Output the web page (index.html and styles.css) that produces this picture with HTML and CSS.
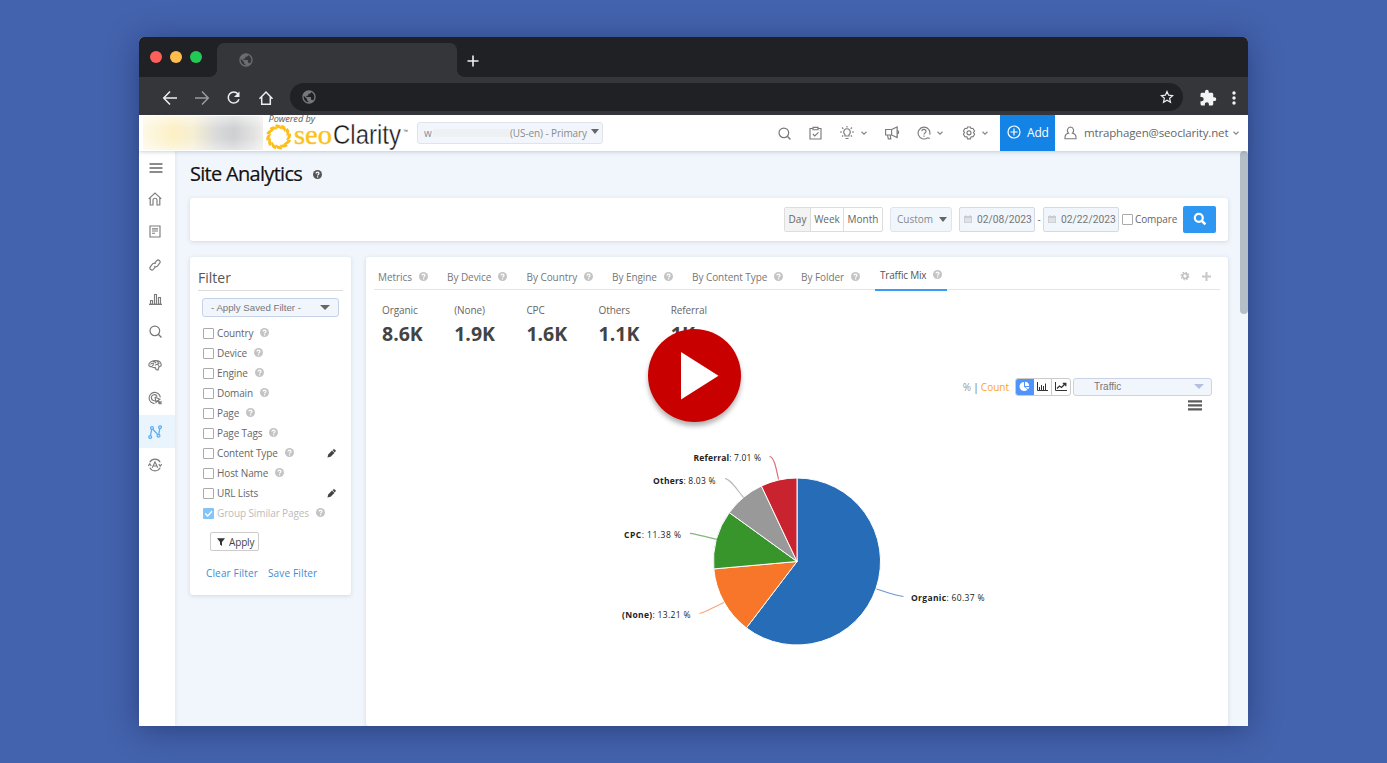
FILE: index.html
```
<!DOCTYPE html>
<html lang="en">
<head>
<meta charset="utf-8">
<title>Site Analytics</title>
<link rel="stylesheet" href="styles.css">
</head>
<body>
<svg class="defs" width="0" height="0">
  <symbol id="help" viewBox="0 0 12 12"><circle cx="6" cy="6" r="6" fill="currentColor"/><path d="M4 4.6C4.1 2.2 8 2.3 8 4.5 8 6 6.1 5.8 6.1 7.3M6.1 8.4V9.9" fill="none" stroke="#fff" stroke-width="1.6"/></symbol>
  <symbol id="globe" viewBox="0 0 24 24"><path fill="currentColor" d="M12 2C6.5 2 2 6.5 2 12s4.500 10 10 10 10-4.500 10-10S17.500 2 12 2zm-1 17.930c-3.950-.490-7-3.850-7-7.930 0-.620.080-1.210.210-1.790L9 15v1c0 1.100.900 2 2 2v1.930zm6.900-2.540c-.260-.810-1-1.390-1.900-1.390h-1v-3c0-.550-.450-1-1-1H8v-2h2c.550 0 1-.450 1-1V7h2c1.100 0 2-.900 2-2v-.410c2.930 1.190 5 4.060 5 7.410 0 2.080-.800 3.970-2.100 5.390z"/></symbol>
  <symbol id="search" viewBox="0 0 14 14"><circle cx="6.300" cy="6.300" r="5.200" fill="none" stroke="currentColor" stroke-width="1.300"/><path d="M10 10l3.400 3.400" stroke="currentColor" stroke-width="1.500"/></symbol>
  <symbol id="chev" viewBox="0 0 6 4"><path d="M.5.700L3 3.100 5.500.700" fill="none" stroke="currentColor" stroke-width="1.200"/></symbol>
  <symbol id="pencil" viewBox="0 0 10 10"><path d="M.5 9.500l.8-3.500L5.600 1.700l2.700 2.700L4 8.700zM6.200 1.200L7.300.300Q8 0 8.700.6l.8.800q.6.700 0 1.300l-.9 1.100z" fill="currentColor"/></symbol>
  <symbol id="cal" viewBox="0 0 8 8"><path d="M0 1h8v7H0zM1.500 0h1v1h-1zM5.500 0h1v1h-1z" fill="#c9cdd2"/><path d="M.8 3h6.400v4.300H.8z" fill="#dfe3e7"/></symbol>
  <symbol id="leaf" viewBox="-14 -14 28 28"><path d="M-3.400-12.200C-.5-13 3.600-11.300 3-7.200 1.500-8.200.6-9-1.200-8.900-2.700-9-3.600-10.300-3.400-12.200z" fill="#fdbd1c"/></symbol>
</svg>

<div class="window">
  <div class="tabstrip">
    <div class="lights"><i class="red"></i><i class="amber"></i><i class="green"></i></div>
    <div class="tab"><svg width="16" height="16"><use href="#globe"/></svg></div>
    <svg class="newtab" width="12" height="12"><path d="M6 .5v11M.5 6h11" stroke="#f1f1f1" stroke-width="1.600"/></svg>
  </div>
  <div class="navbar">
    <svg width="16" height="16" class="nav white"><path d="M15 8H2M8 1.500L1.700 8 8 14.500"/></svg>
    <svg width="16" height="16" class="nav dim"><path d="M1 8h13M8 1.500L14.300 8 8 14.500"/></svg>
    <svg width="16" height="16" class="nav white"><path d="M12 4A5.500 5.500 0 1 0 13 9.300"/><path d="M13.500 1.500v5.500h-5.500z" class="solid"/></svg>
    <svg width="16" height="16" class="nav white home"><path d="M1.500 8.700L8 2l6.500 6.700M3.700 7v7.300h8.600V7"/></svg>
    <div class="url">
      <svg width="16" height="16" class="g"><use href="#globe"/></svg>
      <svg width="14" height="14" viewBox="0 0 14 14" class="star"><path d="M7 1.500l1.600 3.700 4 .4-3 2.700.9 4L7 10.200l-3.500 2.100.9-4-3-2.700 4-.4z" fill="none" stroke="#eee" stroke-width="1.200"/></svg>
    </div>
    <svg class="puzzle" width="18" height="18" viewBox="0 0 24 24"><path fill="#f1f3f4" d="M20.500 11H19V7c0-1.100-.9-2-2-2h-4V3.500a2.500 2.500 0 0 0-5 0V5H4c-1.100 0-2 .9-2 2v3.800h1.500c1.500 0 2.700 1.200 2.700 2.700S5 16.200 3.500 16.200H2V20c0 1.100.9 2 2 2h3.800v-1.500c0-1.500 1.200-2.700 2.700-2.700s2.700 1.200 2.700 2.700V22H17c1.100 0 2-.9 2-2v-4h1.500a2.500 2.500 0 0 0 0-5z"/></svg>
    <svg width="4" height="14"><g fill="#f1f3f4"><circle cx="2" cy="2" r="1.700"/><circle cx="2" cy="7" r="1.700"/><circle cx="2" cy="12" r="1.700"/></g></svg>
  </div>

  <header class="apphead">
    <div class="blurred"></div>
    <svg class="logo" width="146" height="36" viewBox="264 115 146 36">
      <text x="268.500" y="122.300" class="powered" textLength="46.500" lengthAdjust="spacingAndGlyphs">Powered by</text>
      <g transform="translate(278.700 137)">
        <g id="quad"><use href="#leaf" x="-14" y="-14" width="28" height="28"/><use href="#leaf" x="-14" y="-14" width="28" height="28" transform="rotate(30)"/><use href="#leaf" x="-14" y="-14" width="28" height="28" transform="rotate(60)"/></g>
        <use href="#quad" transform="rotate(90)"/><use href="#quad" transform="rotate(180)"/><use href="#quad" transform="rotate(270)"/>
      </g>
      <text x="294" y="144.300" class="seo" textLength="38" lengthAdjust="spacingAndGlyphs">seo</text>
      <text x="333" y="144.300" class="clarity" textLength="68" lengthAdjust="spacingAndGlyphs">Clarity</text>
      <text x="403" y="133" class="tm" textLength="5" lengthAdjust="spacingAndGlyphs">™</text>
    </svg>
    <div class="site"><span class="w">w</span><i class="smudge"></i><span class="loc">(US-en) - Primary</span><i class="tri"></i></div>
    <div class="tools">
      <svg width="13" height="13"><use href="#search"/></svg>
      <svg width="13" height="14" class="ln clip"><path d="M3.500 2.500h-2.500v10.500h11v-10.500h-2.500M4 1.300h5v2.400h-5zM3.800 8l2 2 3.700-3.700"/></svg>
      <svg width="14" height="14" class="ln bulb"><path d="M5 10v-1.300a3.300 3.300 0 1 1 4 0v1.300zM5.500 12.500h3M7 0v1.500M0 6h2M12 6h2M2 1.500l1.300 1.300M12 1.500l-1.300 1.300M2 10.500l1.200-1M12 10.500l-1.200-1"/></svg>
      <svg class="chev c1" width="6" height="4"><use href="#chev"/></svg>
      <svg width="15" height="14" class="ln horn"><path d="M.6 3.500h6v5.500h-6zM6.600 3.500l5.500-2.500v10.500l-5.500-2.500M2.500 9l.8 3.800h2.500l-.6-3.800M12.200 4.500c2 .5 2 3 0 3.500M12.200 1v11"/></svg>
      <svg width="14" height="14" class="ln q"><path d="M10.700 11.700a5.900 5.900 0 1 1 2-3M10.700 11.700l2.100.8M4.800 5.300c.2-2.800 4.400-2.400 4.200.2-.1 1.500-2 1.400-2 3M7 9.500v1.200"/></svg>
      <svg class="chev c2" width="6" height="4"><use href="#chev"/></svg>
      <svg width="14" height="14" class="ln gear"><path d="M5.500 1l3 0 .6 1.700 1.800-.4 1.700 2.700-1.100 1.500 1.100 1.700-1.500 2.600-2 .1-.7 1.900h-2.800l-.7-1.900-2-.1-1.500-2.600 1.100-1.700-1.100-1.500 1.700-2.700 1.800.4z"/><circle cx="7" cy="6.800" r="2"/></svg>
      <svg class="chev c3" width="6" height="4"><use href="#chev"/></svg>
    </div>
    <div class="add"><svg width="14" height="14"><circle cx="7" cy="7" r="6" fill="none" stroke="#fff" stroke-width="1.200"/><path d="M7 3.500v7M3.500 7h7" stroke="#fff" stroke-width="1.200"/></svg>Add</div>
    <div class="user"><svg width="13" height="14" class="ln"><path d="M6.500 1a3.300 3.500 0 0 1 2 6.100c2.400.5 3.800 2 3.500 5.600H1c-.3-3.600 1.100-5.100 3.500-5.600a3.300 3.500 0 0 1 2-6.100z"/></svg><span>mtraphagen@seoclarity.net</span><svg class="chev" width="6" height="4"><use href="#chev"/></svg></div>
  </header>

  <div class="body">
    <nav class="side">
      <div><svg width="14" height="12"><path d="M.5 2h13M.5 6h13M.5 10h13" stroke="#8c8c8c" stroke-width="2"/></svg></div>
      <div><svg width="14" height="14" class="ln"><path d="M.7 6.800L7 1l6.300 5.800M2.200 5.700v7.300h2.800V8.200a2 2 0 0 1 4 0V13h2.800V5.700"/></svg></div>
      <div><svg width="12" height="13" class="ln"><path d="M1 1h10v11H1zM3 3.800h6M3 6h6M3 8.200h3"/></svg></div>
      <div><svg width="12" height="12" class="ln"><path d="M5.200 4.700l2.500-3c1.600-1.800 4.500.5 3 2.500l-2.300 2.900c-.9 1-2.400.8-3.100-.1M6.800 7.300l-2.500 3c-1.600 1.800-4.500-.5-3-2.500l2.300-2.900c.9-1 2.400-.8 3.100.1"/></svg></div>
      <div><svg width="13" height="12" class="ln"><path d="M1.500 7.500h2v3.500h-2zM5.500 1.500h2V11h-2zM9.500 4.500h2V11h-2zM0 11.300h13"/></svg></div>
      <div><svg width="13" height="13"><use href="#search"/></svg></div>
      <div><svg width="14" height="12" class="ln"><path d="M.8 6c.2-5 11.800-6.800 12.400 0 .2 1.200-1.200 1.800-2.200 1.500l-1 3.500-2-.5-.7-2c-2 .5-3-.2-3.500-1-1.500.5-2.700-.2-3-1.500zM2.500 5.500c1-1.700 2.500-1.500 3.500-.5M5 3c1.500-.7 2.500 0 3 1.200M8.500 2.300c1.500.2 2 1.300 2 2.200M7 6.200c1.500-1 3-.8 4 .5M4 6.500l2-.8M9 5l2.500-.5"/></svg></div>
      <div><svg width="14" height="14" class="ln"><path d="M6.500 12.600A5.600 5.600 0 1 1 12.300 6.500M8.500 9.700h-2.500a3 3 0 1 1 3.200-4M7 6l1 5.500 1.400-1.600 2.300 2.600M7 6l4.800 2.300-1.700 1 2.400 2.700"/><path d="M10.500 12.600h2.500v-2.600"/></svg></div>
      <div class="on"><svg width="14" height="14" fill="none" stroke="#5bb0f5" stroke-width="1.300"><path d="M2.500 10.500l1.200-6.200M4.800 4.300l5.200 5.500M10.800 9.300l1-5.800"/><circle cx="2.200" cy="12" r="1.400"/><circle cx="4" cy="3" r="1.400"/><circle cx="10.500" cy="10.800" r="1.400"/><circle cx="12" cy="2.200" r="1.400"/></svg></div>
      <div><svg width="14" height="14" class="ln"><path d="M1.800 4.200a6 6 0 0 1 10.400 0M1.800 9.800a6 6 0 0 0 10.400 0M4.300 9.800L7 3.800l2.700 6M5.300 8h3.400M.2 8l1.600-2.200L3.200 8M13.800 6l-1.600 2.200L10.800 6"/></svg></div>
    </nav>

    <main>
      <h1>Site Analytics <svg width="9" height="9"><use href="#help"/></svg></h1>
      <section class="card bar">
        <div class="seg"><span class="sel">Day</span><span>Week</span><span>Month</span></div>
        <div class="custom">Custom<i class="tri"></i></div>
        <div class="date"><svg width="8" height="8"><use href="#cal"/></svg>02/08/2023</div>
        <b class="dash">-</b>
        <div class="date"><svg width="8" height="8"><use href="#cal"/></svg>02/22/2023</div>
        <i class="cb"></i><span class="cmp">Compare</span>
        <div class="go"><svg width="14" height="14"><circle cx="5.800" cy="5.800" r="4" fill="none" stroke="#fff" stroke-width="2.200"/><path d="M8.800 8.800l3.600 3.600" stroke="#fff" stroke-width="2.600"/></svg></div>
      </section>

      <div class="cols">
        <aside class="card filter">
          <h2>Filter</h2>
          <div class="saved">- Apply Saved Filter -<i class="tri"></i></div>
          <ul>
            <li><i class="cb"></i>Country<svg class="h"><use href="#help"/></svg></li>
            <li><i class="cb"></i>Device<svg class="h"><use href="#help"/></svg></li>
            <li><i class="cb"></i>Engine<svg class="h"><use href="#help"/></svg></li>
            <li><i class="cb"></i>Domain<svg class="h"><use href="#help"/></svg></li>
            <li><i class="cb"></i>Page<svg class="h"><use href="#help"/></svg></li>
            <li><i class="cb"></i>Page Tags<svg class="h"><use href="#help"/></svg></li>
            <li><i class="cb"></i>Content Type<svg class="h"><use href="#help"/></svg><svg class="p"><use href="#pencil"/></svg></li>
            <li><i class="cb"></i>Host Name<svg class="h"><use href="#help"/></svg></li>
            <li><i class="cb"></i>URL Lists<svg class="p"><use href="#pencil"/></svg></li>
            <li class="off"><svg class="tick" width="11" height="11"><rect width="11" height="11" rx="1" fill="#84c5f8"/><path d="M2.200 5.500l2.500 2.500L9 3.200" fill="none" stroke="#fff" stroke-width="1.500"/></svg>Group Similar Pages<svg class="h"><use href="#help"/></svg></li>
          </ul>
          <div class="apply"><svg width="8" height="8"><path d="M0 .3h8L5 4v4L3 6.500V4z" fill="#333"/></svg>Apply</div>
          <div class="links"><a>Clear Filter</a><a>Save Filter</a></div>
        </aside>

        <section class="card panel">
          <div class="tabs">
            <span>Metrics<svg class="h"><use href="#help"/></svg></span>
            <span>By Device<svg class="h"><use href="#help"/></svg></span>
            <span>By Country<svg class="h"><use href="#help"/></svg></span>
            <span>By Engine<svg class="h"><use href="#help"/></svg></span>
            <span>By Content Type<svg class="h"><use href="#help"/></svg></span>
            <span>By Folder<svg class="h"><use href="#help"/></svg></span>
            <span class="cur">Traffic Mix<svg class="h"><use href="#help"/></svg></span>
            <svg class="cog" width="10" height="10"><circle cx="5" cy="5" r="2.500" fill="none" stroke="#c0c0c0" stroke-width="1.700"/><circle cx="5" cy="5" r="3.800" fill="none" stroke="#c0c0c0" stroke-width="1.200" stroke-dasharray="1.500 1.480"/></svg>
            <svg class="plus" width="9" height="9"><path d="M4.500 0v9M0 4.500h9" stroke="#c8c8c8" stroke-width="2"/></svg>
          </div>
          <div class="stats">
            <div>Organic<b>8.6K</b></div><div>(None)<b>1.9K</b></div><div>CPC<b>1.6K</b></div><div>Others<b>1.1K</b></div><div>Referral<b>1K</b></div>
          </div>
          <div class="ctl">
            <span class="pc">% <em>|</em></span><span class="cnt">Count</span>
            <div class="btns">
              <span class="sel"><svg width="11" height="11"><path d="M5 1a4.500 4.500 0 1 0 3.500 7.400L5 5.800z" fill="#fff"/><path d="M6 .8A4.500 4.500 0 0 1 10.200 5H6zM6.200 6h4a4.500 4.500 0 0 1-1 2.200z" fill="#fff"/></svg></span>
              <span><svg width="11" height="9"><path d="M.5 0v8.500H11M2.500 8V5M4.500 8V3M6.500 8V4M8.500 8V1.500" fill="none" stroke="#333" stroke-width="1"/></svg></span>
              <span><svg width="12" height="9"><path d="M.5 0v8.500H12" fill="none" stroke="#333"/><path d="M2 6.500l2.500-2.500 2 1.500L10 2M7.800 1.500h3v2.700" fill="none" stroke="#333" stroke-width="1.300"/></svg></span>
            </div>
            <div class="traffic">Traffic<i class="tri"></i></div>
          </div>
          <svg class="chart" width="862" height="329" viewBox="366 397 862 329">
            <path d="M1188 401.300h14M1188 405.300h14M1188 409.300h14" stroke="#5c5c5c" stroke-width="2.200"/>
            <g stroke="#fff" stroke-width="1">
              <path fill="#266cb7" d="M797 561.500V478a83.500 83.500 0 1 1-50.600 149.900z"/>
              <path fill="#f77629" d="M797 561.500L746.400 627.900A83.500 83.500 0 0 1 713.800 568.900z"/>
              <path fill="#37952b" d="M797 561.500L713.800 568.900A83.500 83.500 0 0 1 729.300 512.600z"/>
              <path fill="#999" d="M797 561.500L729.300 512.600A83.500 83.500 0 0 1 761.400 486z"/>
              <path fill="#c8232e" d="M797 561.500L761.400 486A83.500 83.500 0 0 1 797 478z"/>
            </g>
            <g fill="none" stroke-width="1.200">
              <path stroke="#d8707a" d="M769.500 456.500C774 457 776 467 778.500 479.500"/>
              <path stroke="#bbb" d="M725 478.500C730 479 735 487 743.500 497.500"/>
              <path stroke="#7dbb72" d="M690 533.300C697 534 706 537 717 539.300"/>
              <path stroke="#f8a678" d="M699.500 613.500C706 612 714 607 724 602.500"/>
              <path stroke="#6b9ad0" d="M876.500 589C884 591 892 595 903.500 596.500"/>
            </g>
            <g class="lab">
              <text x="693.500" y="461" textLength="67.500"><tspan>Referral</tspan>: 7.01 %</text>
              <text x="653" y="483.500" textLength="62.500"><tspan>Others</tspan>: 8.03 %</text>
              <text x="624" y="538" textLength="57"><tspan>CPC</tspan>: 11.38 %</text>
              <text x="622" y="618" textLength="68.500"><tspan>(None)</tspan>: 13.21 %</text>
              <text x="911" y="601" textLength="73.500"><tspan>Organic</tspan>: 60.37 %</text>
            </g>
          </svg>
        </section>
      </div>
      <i class="scroll"></i>
    </main>
  </div>
  <div class="play"><svg width="94" height="94"><path d="M33 23v47.500l37.500-23.700z" fill="#fff"/></svg></div>
</div>
</body>
</html>
```
FILE: styles.css
```
* { box-sizing: border-box; }
body { margin: 0; width: 1387px; height: 763px; overflow: hidden; background: #4463ae; padding: 37px 0 0 139px; font-family: "Open Sans", "Noto Sans", sans-serif; font-size: 10px; color: #666; }
svg { display: block; flex: none; }
i { display: block; flex: none; }
.defs { position: absolute; }
.ln { fill: none; stroke: #7c7c7c; stroke-width: 1.150; }
.window { position: relative; width: 1109px; height: 689px; border-radius: 5px 5px 0 0; background: #f1f6fd; box-shadow: 0 4px 32px rgba(10, 20, 60, .42); overflow: visible; }

.tabstrip { height: 40px; background: #202124; border-radius: 5px 5px 0 0; display: flex; padding: 6px 0 0 11px; }
.lights { display: flex; gap: 8px; padding-top: 8px; width: 67px; }
.lights i { width: 12px; height: 12px; border-radius: 50%; }
.red { background: #ff5f5a; }
.amber { background: #ffbd4c; }
.green { background: #22ca55; }
.tab { position: relative; width: 240px; height: 34px; background: #35363a; border-radius: 7px 7px 0 0; padding: 9px 0 0 21px; color: #6a6c70; }
.tab::before, .tab::after { content: ""; position: absolute; bottom: 0; width: 7px; height: 7px; }
.tab::before { left: -7px; background: radial-gradient(circle at 0 0, #202124 6.500px, #35363a 7px); }
.tab::after { right: -7px; background: radial-gradient(circle at 100% 0, #202124 6.500px, #35363a 7px); }
.newtab { margin: 12px 0 0 10px; }

.navbar { height: 38px; background: #35363a; display: flex; align-items: center; padding: 3px 12px 0 23px; }
.nav { fill: none; stroke-width: 1.500; margin-right: 16px; }
.nav.home { margin: 0; }
.white { stroke: #eee; }
.dim { stroke: #9a9b9e; }
.solid { fill: #eee; stroke: none; }
.url { width: 894px; height: 28px; margin: -2px 0 0 16px; border-radius: 14px; background: #202124; display: flex; justify-content: space-between; align-items: center; padding: 0 9px 0 11px; color: #76787c; }
.puzzle { margin: 0 15px 0 16px; }

.apphead { position: relative; z-index: 2; height: 36px; background: #fff; display: flex; align-items: center; box-shadow: 0 1px 4px rgba(60, 70, 90, .25); }
.blurred { width: 120px; height: 34px; margin: 0 1px 0 4px; background: linear-gradient(90deg, #fdf8e6 0, #fdf0c6 25%, #f6efd4 42%, #d8d9da 62%, #cfd0d2 76%, #e2e2e2 92%, #efeeea 100%); -webkit-mask-image: linear-gradient(180deg, rgba(0,0,0,.5), #000 35%, #000 65%, rgba(0,0,0,.6)); }
.powered { font: italic 8px "Noto Sans", sans-serif; fill: #666; }
.seo { font: 27px "Liberation Serif", serif; fill: #fcc21b; stroke: #fcc21b; stroke-width: .4; }
.clarity { font: 27px "Liberation Sans", sans-serif; fill: #1c1c1c; stroke: #fff; stroke-width: .35; }
.tm { font: 5px "Liberation Sans", sans-serif; fill: #333; }
.site { margin-left: 7px; width: 186px; height: 22px; background: #f2f6fc; border: 1px solid #dfe3ea; border-radius: 3px; display: flex; align-items: center; padding-left: 6px; font-size: 10px; color: #8b8b8b; white-space: nowrap; margin-top: -1px; }
.w { width: 9px; }
.loc { letter-spacing: -.1px; }
.smudge { width: 77px; height: 8px; background: #eef1f4; }
.tri { border: 4px solid transparent; border-top: 5px solid #666; border-bottom: 0; }
.site .tri { margin: -3px 0 0 4px; }
.tools { display: flex; align-items: center; margin-left: 175px; width: 222px; color: #777; }
.clip { margin-left: 18px; }
.bulb { margin-left: 18px; }
.chev { color: #888; margin-left: 7px; }
.horn { margin-left: 18px; }
.q { margin-left: 17px; }
.c2 { margin-left: 6px; }
.gear { margin-left: 19px; }
.c3 { margin-left: 6px; }
.add { width: 55px; height: 36px; background: #1483e6; color: #fff; font-size: 12px; letter-spacing: -.2px; display: flex; align-items: center; gap: 6px; padding: 0 0 2px 7px; }
.user { display: flex; align-items: center; padding: 0 0 1px 9px; font-size: 11.500px; white-space: nowrap; letter-spacing: -.15px; }
.user span { margin-left: 7px; width: 149px; }
.user .chev { margin-left: 0; }
.user span { flex: none; }

.body { display: flex; height: 575px; }
.side { width: 36px; background: #fff; padding-top: 3px; color: #777; box-shadow: 1px 0 3px rgba(60, 70, 90, .08); }
.side div { height: 33.300px; display: flex; align-items: center; justify-content: center; padding-right: 4px; }
.side div:first-child { height: 28px; padding-top: 0; padding-right: 3px; }
.side .on { background: #eaf4fd; }
main { position: relative; width: 1073px; padding: 0 20px 0 15px; }
h1 { margin: 0; height: 47px; font-size: 20px; font-weight: 400; line-height: 46px; color: #111; letter-spacing: -.7px; -webkit-text-stroke: .2px #111; display: flex; align-items: center; gap: 11px; padding-bottom: 1px; }
h1 svg { color: #555; }
.card { background: #fff; border-radius: 3px; box-shadow: 0 1px 4px rgba(60, 70, 90, .17); }
.bar { height: 43px; display: flex; align-items: center; padding: 0 12px 1px 0; justify-content: flex-end; font-size: 10px; }
.seg { display: flex; height: 25px; border: 1px solid #ddd; border-radius: 2px; line-height: 23px; margin-right: 7px; }
.seg span { width: 33px; text-align: center; border-left: 1px solid #ddd; }
.seg span:last-child { width: 39px; }
.seg .sel { width: 25px; background: #f3f3f3; border: 0; }
.custom { width: 62px; height: 25px; border: 1px solid #dde4ee; border-radius: 3px; background: #f1f6fd; color: #888; display: flex; align-items: center; justify-content: space-between; padding: 0 4px 0 6px; margin-right: 7px; }
.date { width: 76px; height: 25px; border: 1px solid #d3dae3; border-radius: 2px; background: #f1f6fd; display: flex; align-items: center; gap: 5px; padding-left: 4px; font: 10.300px Roboto, sans-serif; color: #777; }
.dash { width: 8px; text-align: center; font-weight: 400; }
.cb { width: 11px; height: 11px; border: 1px solid #aaa; border-radius: 1px; background: #fff; }
.bar .cb { margin-left: 3px; }
.cmp { margin: 0 6px 0 2px; width: 42px; letter-spacing: -.1px; }
.go { width: 33px; height: 27px; border-radius: 2px; background: #2e97f2; display: flex; align-items: center; justify-content: center; }

.cols { display: flex; gap: 15px; padding-top: 16px; }
.filter { width: 161px; height: 338px; padding: 11px 8px 0; }
h2 { margin: 0 0 7px; font-size: 14px; font-weight: 400; line-height: 19px; height: 23px; border-bottom: 1px solid #ddd; color: #555; }
.saved { margin: 0 4px; height: 19px; border: 1px solid #c6d2e8; border-radius: 3px; background: #f1f6fd; font: 9.700px "Liberation Sans", sans-serif; display: flex; align-items: center; justify-content: space-between; padding: 0 8px; color: #777; }
.saved .tri { border-width: 5px 5px 0; }
ul { margin: 6px 0 0 5px; padding: 0; list-style: none; letter-spacing: -.12px; }
li { height: 20px; display: flex; align-items: center; gap: 3px; }
.h { width: 9px; height: 9px; color: #c4c4c4; margin-left: 4px; margin-top: -1px; }
.p { width: 9px; height: 9px; color: #444; margin: 0 7px 0 auto; }
.off { color: #bbb; }
.apply { width: 49px; height: 19px; margin: 9px 0 0 12px; border: 1px solid #ccc; border-radius: 2px; display: flex; align-items: center; gap: 4px; padding-left: 6px; color: #444; letter-spacing: -.15px; }
.links { display: flex; gap: 10px; margin: 15px 0 0 8px; color: #3d8cd6; letter-spacing: .15px; }

.panel { width: 862px; height: 469px; display: flex; flex-direction: column; }
.tabs { height: 33px; margin: 0 8px; padding: 6px 0 0 4px; border-bottom: 1px solid #e5e5e5; display: grid; grid-template-columns: 69px 79.500px 85.500px 80px 109px 74px 72px 243px 20.500px; letter-spacing: -.06px; }
.tabs > span { display: flex; align-items: center; gap: 3px; color: #777; height: 28px; white-space: nowrap; }
.tabs .cur { border-bottom: 2px solid #3a9bf4; padding: 0 0 2px 5px; color: #555; height: 28px; letter-spacing: -.2px; }
.cog { justify-self: end; margin-top: 8px; }
.plus { justify-self: end; margin-top: 9px; }
.stats { display: flex; padding: 13px 0 0 16px; height: 86px; }
.stats div { width: 72.200px; line-height: 14px; letter-spacing: -.1px; }
.stats b { display: block; font-size: 19.500px; line-height: 34px; color: #444; letter-spacing: 0; }
.ctl { display: flex; align-items: center; justify-content: flex-end; padding-right: 16px; height: 21px; }
.pc { width: 18px; color: #999; white-space: nowrap; letter-spacing: -.2px; }
.pc em { font-style: normal; color: #666; }
.cnt { color: #f9a61f; margin-right: 6px; }
.btns { display: flex; width: 56px; height: 18px; border: 1px solid #ccc; border-radius: 3px; overflow: hidden; margin-right: 2px; }
.btns span { flex: 1; display: flex; align-items: center; justify-content: center; border-right: 1px solid #ccc; }
.btns span:last-child { border: 0; }
.btns .sel { background: #5094fb; border: 0; }
.traffic { width: 139px; height: 18px; border: 1px solid #ccd3e8; border-radius: 3px; background: #f1f6fd; display: flex; align-items: center; justify-content: space-between; padding: 0 7px 0 20px; color: #777; font-family: "Liberation Sans", sans-serif; }
.traffic .tri { border-width: 5px 5px 0; border-top-color: #b6c0dd; }
.lab { font: 8.500px "Open Sans", sans-serif; fill: #222; }
.lab tspan { font-weight: 700; }
.scroll { position: absolute; right: 0; top: 0; width: 8px; height: 163px; border-radius: 4px; background: #b4bec7; }
.play { position: absolute; left: 509px; top: 292px; width: 93px; height: 93px; border-radius: 50%; background: #c80000; box-shadow: 0 4px 5px rgba(0, 0, 0, .3); }
```
